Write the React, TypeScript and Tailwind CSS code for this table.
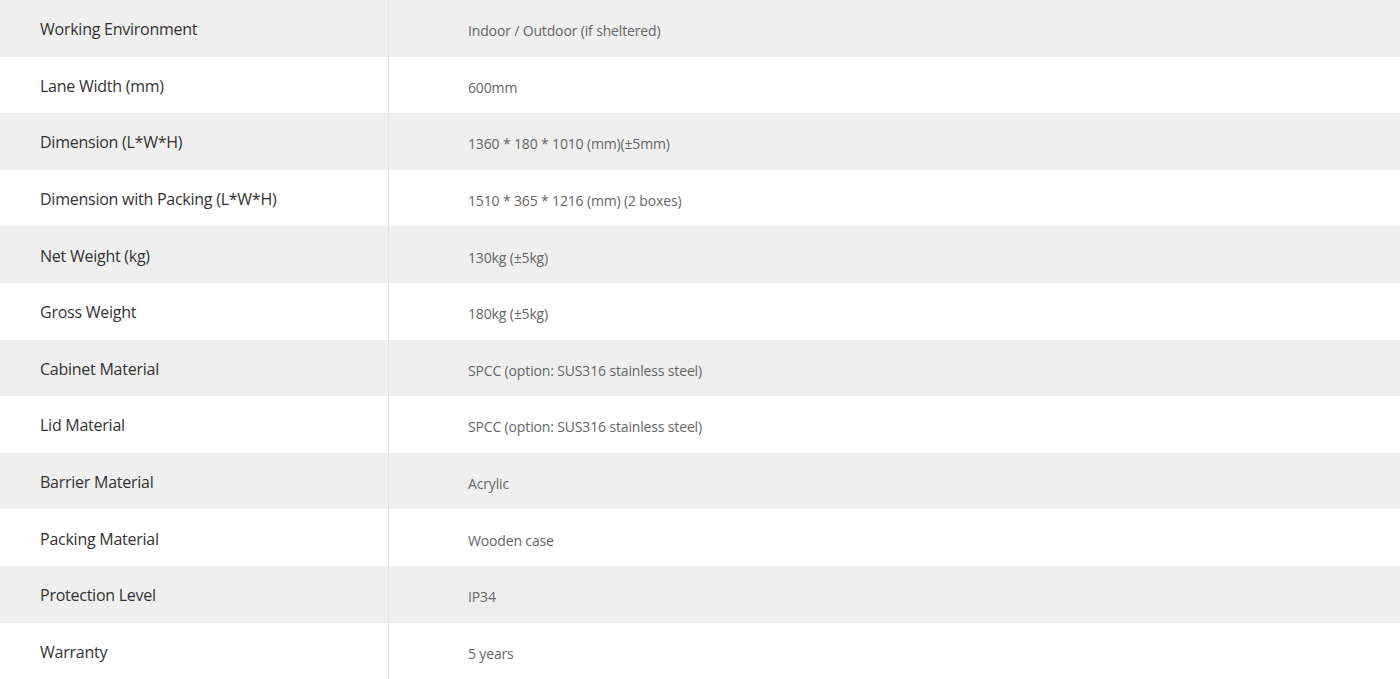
import React from 'react';

const specs: [string, string][] = [
  ['Working Environment', 'Indoor / Outdoor (if sheltered)'],
  ['Lane Width (mm)', '600mm'],
  ['Dimension (L*W*H)', '1360 * 180 * 1010 (mm)(±5mm)'],
  ['Dimension with Packing (L*W*H)', '1510 * 365 * 1216 (mm) (2 boxes)'],
  ['Net Weight (kg)', '130kg (±5kg)'],
  ['Gross Weight', '180kg (±5kg)'],
  ['Cabinet Material', 'SPCC (option: SUS316 stainless steel)'],
  ['Lid Material', 'SPCC (option: SUS316 stainless steel)'],
  ['Barrier Material', 'Acrylic'],
  ['Packing Material', 'Wooden case'],
  ['Protection Level', 'IP34'],
  ['Warranty', '5 years'],
];

const App: React.FC = () => {
  return (
    <div className="w-[1400px] h-[679px] overflow-hidden bg-white font-['Open_Sans',sans-serif]">
      {specs.map(([label, value], i) => (
        <div
          key={label}
          className={`flex h-[56.6px] ${i % 2 === 0 ? 'bg-[#efefef]' : 'bg-white'}`}
        >
          <div className="w-[389px] shrink-0 flex items-center pl-10 pt-[2px] border-r border-[#e3e3e3] text-[16px] tracking-[-0.25px] text-[#333]">
            {label}
          </div>
          <div className="flex-1 flex items-center pl-[79px] pt-[5px] text-[14px] tracking-[-0.15px] text-[#666]">
            {value}
          </div>
        </div>
      ))}
    </div>
  );
};

export default App;
